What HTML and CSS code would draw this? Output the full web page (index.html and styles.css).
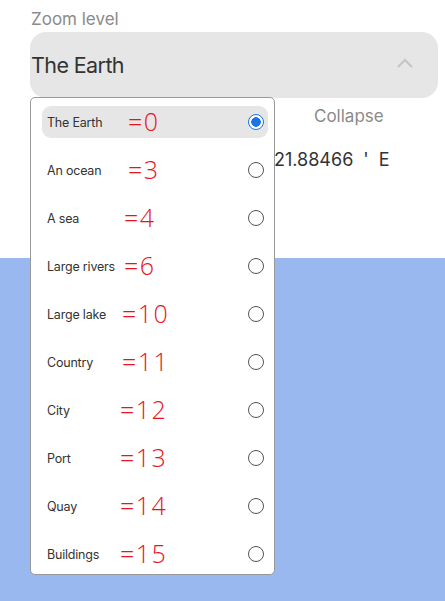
FILE: index.html
```html
<!DOCTYPE html>
<html lang="en">
<head>
  <meta charset="UTF-8" />
  <title>Zoom level</title>
  <meta name="viewport" content="width=device-width, initial-scale=1" />
  <link rel="stylesheet" href="styles.css">
</head>
<body>

  <section class="panel">
    <label class="field-label">Zoom level</label>
    <div class="select">
      <span>The Earth</span>
      <svg class="chevron" width="18" height="10" viewBox="0 0 18 10">
        <path d="M2 9 L9 2 L16 9" fill="none" stroke="#c4c4c4" stroke-width="2" />
      </svg>
    </div>
    <div class="info">
      <div class="collapse">Collapse</div>
      <div class="coord">21.88466 ' E</div>
    </div>
  </section>

  <div class="map"></div>

  <ul class="menu">
    <li class="item active"><span class="name">The Earth</span><span class="note n1">=0</span><span class="radio on"></span></li>
    <li class="item"><span class="name">An ocean</span><span class="note n1">=3</span><span class="radio"></span></li>
    <li class="item"><span class="name">A sea</span><span class="note n2">=4</span><span class="radio"></span></li>
    <li class="item"><span class="name">Large rivers</span><span class="note n2">=6</span><span class="radio"></span></li>
    <li class="item"><span class="name">Large lake</span><span class="note n3">=10</span><span class="radio"></span></li>
    <li class="item"><span class="name">Country</span><span class="note n3">=11</span><span class="radio"></span></li>
    <li class="item"><span class="name">City</span><span class="note n4">=12</span><span class="radio"></span></li>
    <li class="item"><span class="name">Port</span><span class="note n4">=13</span><span class="radio"></span></li>
    <li class="item"><span class="name">Quay</span><span class="note n4">=14</span><span class="radio"></span></li>
    <li class="item"><span class="name">Buildings</span><span class="note n4">=15</span><span class="radio"></span></li>
  </ul>

</body>
</html>
```

FILE: styles.css
```css
body {
  margin: 0;
  font-family: Inter, 'Noto Sans', sans-serif;
  background: #9ab8f0;
  color: #333;
}

.panel {
  background: #fff;
  height: 258px;
  padding: 8px 7px 0 30px;
  box-sizing: border-box;
}

.field-label {
  display: block;
  font-size: 17px;
  line-height: 22px;
  color: #8a8a8a;
  margin-left: 1px;
}

.select {
  margin-top: 2px;
  height: 66px;
  background: #e6e6e6;
  border-radius: 16px;
  display: flex;
  align-items: center;
  justify-content: space-between;
  padding: 0 24px 0 1px;
  box-sizing: border-box;
  font-size: 21.5px;
  color: #333;
  letter-spacing: -0.6px;
}

.chevron {
  margin-top: -4px;
}

.info {
  padding-left: 244px;
}

.collapse {
  margin-top: 7px;
  padding-left: 40px;
  font-size: 17px;
  line-height: 22px;
  color: #8a8a8a;
}

.coord {
  margin-top: 22px;
  font-size: 18px;
  line-height: 22px;
  color: #333;
  word-spacing: 5px;
}

.menu {
  position: absolute;
  top: 97px;
  left: 30px;
  width: 245px;
  margin: 0;
  padding: 8px 6px 4px 11px;
  box-sizing: border-box;
  list-style: none;
  background: #fff;
  border: 1px solid #999;
  border-radius: 5px;
  display: flex;
  flex-direction: column;
  gap: 16px;
}

.item {
  height: 32px;
  display: flex;
  align-items: center;
  padding: 0 4px 0 5px;
  border-radius: 9px;
  font-size: 12.5px;
  letter-spacing: -0.2px;
  color: #333;
  white-space: nowrap;
}

.item.active {
  background: #e6e6e6;
}

.name {
  width: 70px;
  flex-shrink: 0;
}

.note {
  font-family: 'Open Sans', sans-serif;
  font-weight: 300;
  font-size: 25px;
  letter-spacing: 1.5px;
  color: #e8141c;
  line-height: 1;
  margin-top: -2px;
}

.n1 { margin-left: 11px; }
.n2 { margin-left: 7px; }
.n3 { margin-left: 5px; }
.n4 { margin-left: 3px; }

.radio {
  margin-left: auto;
  width: 16px;
  height: 16px;
  border: 1.5px solid #555;
  border-radius: 50%;
  box-sizing: border-box;
  flex-shrink: 0;
}

.radio.on {
  border-color: #1a73e8;
  background: radial-gradient(circle, #1a73e8 0 4.5px, #fff 5px);
}
```
